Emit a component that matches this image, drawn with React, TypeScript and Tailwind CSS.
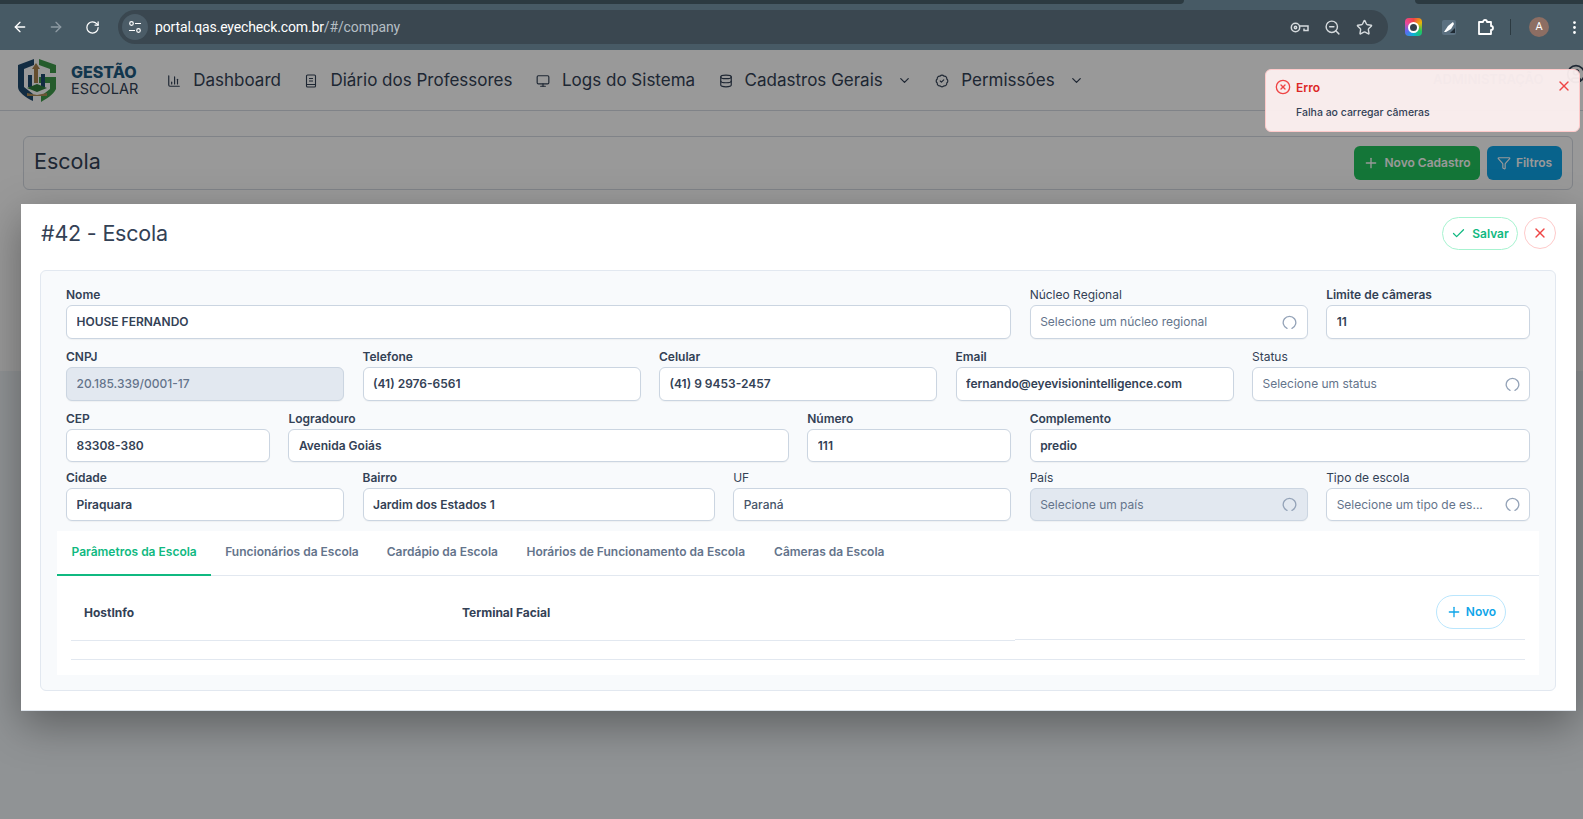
import { ArrowLeft, ArrowRight, BadgeCheck, Check, ChartColumn, ChevronDown, CircleUser, CircleX, Database, EllipsisVertical, Filter, Monitor, Plus, RotateCw, Star, X, ZoomOut } from "lucide-react";

const font = "font-['Inter','Liberation_Sans',sans-serif]";

// browser toolbar on top of the page
const BrowserBar = () => (
    <div className="relative h-[50px] bg-[#475a65] text-white">
        <div className="absolute left-0 top-0 h-[4px] w-[1184px] rounded-br-lg bg-[#2c3a41]"></div>
        <div className="absolute right-0 top-0 h-[4px] w-[168px] rounded-bl-lg bg-[#2c3a41]"></div>
        <div className="flex h-full items-center pt-[4px]">
            <ArrowLeft size={16} className="ml-[12px]" />
            <ArrowRight size={16} className="ml-[20px] text-[#8d9aa2]" />
            <RotateCw size={15} className="ml-[21px]" />
            <div className="ml-[18px] flex h-[34px] w-[1270px] items-center rounded-full bg-[#3a4750]">
                <div className="flex h-[26px] w-[26px] ml-[4px] items-center justify-center rounded-full bg-[#4b5c67]">
                    <svg width="14" height="14" viewBox="0 0 14 14" fill="none" stroke="white" strokeWidth="1.2">
                        <circle cx="3.5" cy="3.5" r="1.8" />
                        <path d="M7 3.5h6M1 10.5h6" />
                        <circle cx="10.5" cy="10.5" r="1.8" />
                    </svg>
                </div>
                <span className="ml-[7px] font-['Roboto',sans-serif] text-[14px] tracking-[-0.14px] text-white">
                    portal.qas.eyecheck.com.br<span className="text-[#b5bec4]">/#/company</span>
                </span>
                <div className="ml-auto mr-[15px] flex items-center gap-[15px] text-[#d5dadd]">
                    <svg width="19" height="17" viewBox="0 0 19 17" fill="none" stroke="currentColor" strokeWidth="1.5">
                        <circle cx="5.5" cy="8.5" r="4.2" />
                        <circle cx="5.5" cy="8.5" r="1.2" />
                        <path d="M9.7 7H18V11.5H14V9.5" />
                    </svg>
                    <ZoomOut size={17} />
                    <Star size={17} />
                </div>
            </div>
            <div className="ml-[17px] flex h-[18px] w-[17px] items-center justify-center rounded-[4px] bg-[conic-gradient(#ef4444,#eab308,#22c55e,#06b6d4,#6366f1,#ec4899,#ef4444)]">
                <div className="h-[11px] w-[11px] rounded-full border-2 border-white bg-[#33424c]"></div>
            </div>
            <div className="ml-[20px] flex h-[15px] w-[14px] items-center justify-center rounded-[2px] bg-[#5b7080]">
                <svg width="14" height="14" viewBox="0 0 14 14">
                    <path d="M2 12 6 6l5-4 1 2-3 5-5 3Z" fill="white" />
                    <path d="M8 13h5V8Z" fill="#1f2a33" />
                </svg>
            </div>
            <svg width="18" height="18" viewBox="0 0 18 18" fill="none" stroke="white" strokeWidth="1.8" strokeLinejoin="round" className="ml-[21px]">
                <path d="M2 4H6a2 2 0 0 1 4 0h4v4a2 2 0 0 1 0 4v4H2Z" />
            </svg>
            <div className="ml-[15px] h-[16px] w-px bg-[#2c3a41]"></div>
            <div className="ml-[18px] flex h-[20px] w-[20px] items-center justify-center rounded-full bg-[#8d6e63] font-['Roboto',sans-serif] text-[11px]">A</div>
            <EllipsisVertical size={17} className="ml-[17px]" />
        </div>
    </div>
);

const Logo = () => (
    <svg width="44" height="46" viewBox="0 0 44 46" fill="none">
        <path d="M19 2 3 8v22c0 5 8 11 15 14V37L9 30V12l10-4Z" fill="#1e4a6e" />
        <path d="M24 2l17 6v8H35v-4L24 8Z" fill="#3f9a4a" />
        <path d="M24 20h17v12c-3 6-10 10-15 13v-6l9-7v-6H24Z" fill="#3f9a4a" />
        <path d="M21 6l4 6h-2v14h-4V12h-2Z" fill="#a9824d" />
        <path d="M13 18h4v12h-4ZM26 17h4v13h-4Z" fill="#1e4a6e" />
        <path d="M12 31l10-4 10 4-10 4Z" fill="#2f7d3b" />
        <path d="M12 36l10 2 10-2v3H12Z" fill="#b08d57" />
    </svg>
);

const NotebookIcon = () => (
    <svg width="14" height="14" viewBox="0 0 14 14" fill="none" stroke="currentColor" strokeWidth="1.1">
        <rect x="2.5" y="1" width="9" height="12" rx="1" />
        <path d="M5 4.5h4M5 7h4M2.5 10.5h9" />
    </svg>
);

const NavItem = ({ icon, label, caret }: { icon: React.ReactNode; label: string; caret?: boolean }) => (
    <div className="flex items-center text-[#334155]">
        {icon}
        <span className="ml-[12px] text-[17px]">{label}</span>
        {caret && <ChevronDown size={15} className="ml-[14px]" />}
    </div>
);

const Header = () => (
    <div className="relative flex h-[61px] items-center border-b border-[#d5dbe3] bg-white pl-[15px]">
        <Logo />
        <div className="ml-[12px] flex flex-col leading-none">
            <span className="text-[16px] font-extrabold text-[#1e5a80]">GESTÃO</span>
            <span className="mt-[2px] text-[14.5px] text-[#334155]">ESCOLAR</span>
        </div>
        <div className="ml-[29px] flex items-center gap-[23.5px] pt-[1px]">
            <NavItem icon={<ChartColumn size={14} />} label="Dashboard" />
            <NavItem icon={<NotebookIcon />} label="Diário dos Professores" />
            <NavItem icon={<Monitor size={14} />} label="Logs do Sistema" />
            <NavItem icon={<Database size={14} />} label="Cadastros Gerais" caret />
            <NavItem icon={<BadgeCheck size={14} />} label="Permissões" caret />
        </div>
        <span className="absolute left-[1433px] top-[20px] text-[13px] font-semibold text-[#94a3b8]">ADMINISTRAÇÃO</span>
        <CircleUser size={20} className="absolute left-[1566px] top-[14px] text-[#334155]" />
    </div>
);

const PageBody = () => (
    <div className="h-[260px] bg-white pl-[23px] pr-[10px] pt-[25px]">
        <div className="flex h-[54px] items-center justify-between rounded-md border border-[#d5dbe3] pl-[10px] pr-[10px]">
            <h1 className="pb-[3px] text-[21.5px] text-[#334155]">Escola</h1>
            <div className="flex gap-[7px]">
                <button className="flex h-[34px] w-[126px] items-center justify-center gap-[5px] rounded-md bg-[#22c55e] text-[12px] font-semibold text-white">
                    <Plus size={16} /> Novo Cadastro
                </button>
                <button className="flex h-[34px] w-[75px] items-center justify-center gap-[5px] rounded-md bg-[#0ea5e9] text-[12px] font-semibold text-white">
                    <Filter size={14} /> Filtros
                </button>
            </div>
        </div>
    </div>
);

const inputBase = "flex w-full items-center rounded-md border border-[#cbd5e1] px-[9.5px] text-[12px] shadow-[0_1px_1px_rgba(0,0,0,0.04)]";

type FieldProps = { label: string; value?: string; placeholder?: string; span: string; h: string; plainLabel?: boolean; disabled?: boolean; spinner?: boolean };

const Field = ({ label, value, placeholder, span, h, plainLabel, disabled, spinner }: FieldProps) => (
    <div className={span}>
        <label className={`mb-[2px] block h-[16px] text-[12px] leading-[16px] text-[#334155] ${placeholder || plainLabel ? "font-normal" : "font-semibold"}`}>{label}</label>
        <div className={`${inputBase} ${h} ${disabled ? "bg-[#e2e8f0]" : "bg-white"}`}>
            <span className={`truncate ${placeholder ? "text-[#64748b]" : disabled ? "font-medium text-[#64748b]" : plainLabel ? "font-medium text-[#475569]" : "font-semibold text-[#334155]"}`}>{value ?? placeholder}</span>
            {spinner && (
                <svg width="15" height="15" viewBox="0 0 15 15" fill="none" className="ml-auto shrink-0">
                    <path d="M5 13.4A6.3 6.3 0 1 1 10 13.4" stroke="#94a3b8" strokeWidth="1.3" strokeLinecap="round" />
                </svg>
            )}
        </div>
    </div>
);

const Tabs = () => (
    <div className="flex h-[45px] border-b border-[#e2e8f0] text-[12px] font-semibold text-[#64748b]">
        <div className="-mb-px flex items-center border-b-2 border-[#10b981] px-[14.5px] pb-[2px] text-[#10b981]">Parâmetros da Escola</div>
        <div className="flex items-center px-[14px] pb-[2px]">Funcionários da Escola</div>
        <div className="flex items-center px-[14px] pb-[2px]">Cardápio da Escola</div>
        <div className="flex items-center px-[14.5px] pb-[2px]">Horários de Funcionamento da Escola</div>
        <div className="flex items-center px-[14.5px] pb-[2px]">Câmeras da Escola</div>
    </div>
);

const ParamTable = () => (
    <div className="mx-[14px] border-b border-[#e2e8f0]">
        <div className="flex h-[65px]">
            <div className="flex w-[391px] items-center border-b border-[#e2e8f0] pl-[13px] pt-[9px] text-[12px] font-bold text-[#334155]">HostInfo</div>
            <div className="flex w-[553px] items-center border-b border-[#e2e8f0] pt-[9px] text-[12px] font-bold text-[#334155]">Terminal Facial</div>
            <div className="mb-[1px] flex flex-1 items-center justify-end border-b border-[#e2e8f0] pr-[19px] pt-[9px]">
                <button className="flex h-[34px] w-[70px] items-center justify-center gap-[4px] rounded-full border border-[#bae6fd] bg-white text-[12px] font-semibold text-[#0ea5e9]">
                    <Plus size={16} /> Novo
                </button>
            </div>
        </div>
        <div className="h-[18px]"></div>
    </div>
);

// modal do cadastro, fica sobre o overlay
const SchoolModal = () => (
    <div className="absolute left-[21px] top-[204px] h-[507px] w-[1555px] border-b border-[#dfe5ec] bg-white pl-[19px] pr-[20px] pt-[13px] shadow-[0_14px_40px_rgba(0,0,0,0.35)]">
        <div className="flex h-[53px] items-start justify-between">
            <h2 className="pl-[1px] text-[21.5px] leading-[32px] tracking-[-0.2px] text-[#334155]">#42 - Escola</h2>
            <div className="flex gap-[6px]">
                <button className="flex h-[33px] w-[76px] items-center justify-center gap-[6px] rounded-full border border-[#a7f3d0] text-[12px] font-semibold text-[#10b981]">
                    <Check size={15} /> Salvar
                </button>
                <button className="flex h-[32px] w-[32px] items-center justify-center rounded-full border border-[#fecaca] text-[#ef4444]">
                    <X size={16} />
                </button>
            </div>
        </div>
        <div className="h-[421px] rounded-md border border-[#e2e8f0] bg-[#f8fafc] px-[16px] pt-[16px]">
            <div className="px-[9px]">
                <div className="mb-[10px] grid grid-cols-20 gap-x-[18.5px]">
                    <Field span="col-span-13" h="h-[34px]" label="Nome" value="HOUSE FERNANDO" />
                    <Field span="col-span-4" h="h-[34px]" label="Núcleo Regional" placeholder="Selecione um núcleo regional" spinner />
                    <Field span="col-span-3" h="h-[34px]" label="Limite de câmeras" value="11" />
                </div>
                <div className="mb-[10px] grid grid-cols-20 gap-x-[18.5px]">
                    <Field span="col-span-4" h="h-[34px]" label="CNPJ" value="20.185.339/0001-17" disabled />
                    <Field span="col-span-4" h="h-[34px]" label="Telefone" value="(41) 2976-6561" />
                    <Field span="col-span-4" h="h-[34px]" label="Celular" value="(41) 9 9453-2457" />
                    <Field span="col-span-4" h="h-[34px]" label="Email" value="fernando@eyevisionintelligence.com" />
                    <Field span="col-span-4" h="h-[34px]" label="Status" placeholder="Selecione um status" spinner />
                </div>
                <div className="mb-[8px] grid grid-cols-20 gap-x-[18.5px]">
                    <Field span="col-span-3" h="h-[33px]" label="CEP" value="83308-380" />
                    <Field span="col-span-7" h="h-[33px]" label="Logradouro" value="Avenida Goiás" />
                    <Field span="col-span-3" h="h-[33px]" label="Número" value="111" />
                    <Field span="col-span-7" h="h-[33px]" label="Complemento" value="predio" />
                </div>
                <div className="grid grid-cols-20 gap-x-[18.5px]">
                    <Field span="col-span-4" h="h-[33px]" label="Cidade" value="Piraquara" />
                    <Field span="col-span-5" h="h-[33px]" label="Bairro" value="Jardim dos Estados 1" />
                    <Field span="col-span-4" h="h-[33px]" label="UF" value="Paraná" plainLabel />
                    <Field span="col-span-4" h="h-[33px]" label="País" placeholder="Selecione um país" disabled spinner />
                    <Field span="col-span-3" h="h-[33px]" label="Tipo de escola" placeholder="Selecione um tipo de es..." spinner />
                </div>
            </div>
            <div className="mt-[10px] h-[144px] bg-white">
                <Tabs />
                <ParamTable />
            </div>
        </div>
    </div>
);

const Toast = () => (
    <div className="absolute left-[1265px] top-[69px] h-[63px] w-[315px] rounded-md border border-[#fecaca] bg-[#fdf0f0]/95">
        <CircleX size={16} className="absolute left-[9px] top-[9px] text-[#ef4444]" />
        <X size={16} className="absolute right-[7px] top-[8px] text-[#ef4444]" />
        <div className="ml-[30px] mt-[10px] text-[12px] font-semibold leading-[16px] text-[#dc2626]">Erro</div>
        <div className="ml-[30px] mt-[9px] text-[10.5px] font-medium leading-[16px] text-[#334155]">Falha ao carregar câmeras</div>
    </div>
);

export default function App() {
    return (
        <div className={`relative h-[819px] w-full overflow-hidden bg-[#f1f5f9] ${font}`}>
            <BrowserBar />
            <Header />
            <PageBody />
            <div className="absolute inset-x-0 bottom-0 top-[50px] bg-black/40"></div>
            <SchoolModal />
            <Toast />
        </div>
    );
}
